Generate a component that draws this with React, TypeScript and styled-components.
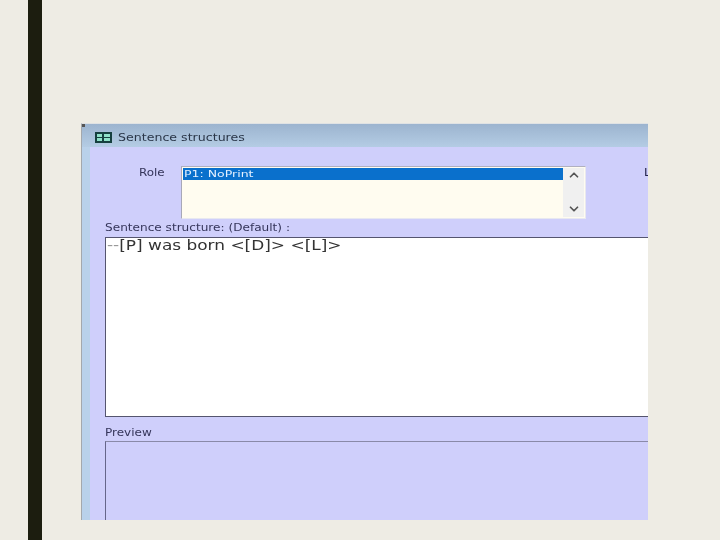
import React from 'react';
import styled, { createGlobalStyle } from 'styled-components';
import { ChevronUp, ChevronDown } from 'lucide-react';

const Global = createGlobalStyle`
  html, body { margin: 0; padding: 0; background: #eeece4; }
  body { font-family: "DejaVu Sans", Verdana, sans-serif; }
`;

const Slide = styled.div`
  width: 720px;
  height: 540px;
  overflow: hidden;
  display: flex;
  background: #eeece4;
`;

const SideBar = styled.div`
  width: 14px;
  margin-left: 28px;
  background: #1c1d0f;
`;

const Shot = styled.div`
  width: 566px;
  height: 396px;
  margin: 123px 0 0 39px;
  position: relative;
  overflow: hidden;
  display: flex;
  flex-direction: column;
  background: #cfcffb;
  border-left: 1px solid #a4a8ac;
  border-top: 1px solid #dfe2e4;
  filter: blur(0.4px);
`;

const CornerTick = styled.div`
  position: absolute;
  left: 0;
  top: 0;
  width: 3px;
  height: 3px;
  background: #555;
`;

const TitleBar = styled.div`
  height: 23px;
  flex: none;
  box-sizing: border-box;
  display: flex;
  align-items: center;
  gap: 6px;
  padding: 3px 0 0 13px;
  background: linear-gradient(#9cb4cf, #b4cce4);
`;

const StretchText = styled.span<{ $size: number; $scale: number; $color?: string }>`
  display: inline-block;
  font-size: ${(p) => p.$size}px;
  line-height: 1;
  white-space: nowrap;
  color: ${(p) => p.$color ?? '#35355a'};
  transform: scaleX(${(p) => p.$scale});
  transform-origin: left center;
`;

const TitleText = styled(StretchText)`
  padding-top: 2px;
`;

const Body = styled.div`
  flex: 1;
  display: flex;
  min-height: 0;
`;

const EdgeStrip = styled.div`
  width: 8px;
  flex: none;
  background: #b9d1ea;
`;

const Content = styled.div`
  flex: 1;
  min-width: 0;
  padding: 19px 0 0 15px;
  display: flex;
  flex-direction: column;
`;

const RoleRow = styled.div`
  height: 53px;
  flex: none;
  display: flex;
  position: relative;
`;

const RoleLabel = styled.div`
  width: 76px;
  padding-left: 34px;
  box-sizing: border-box;
  line-height: 10px;
`;

const ListBox = styled.div`
  width: 405px;
  height: 53px;
  box-sizing: border-box;
  display: flex;
  background: #fffcf0;
  border: 1px solid;
  border-color: #b0b0c0 #e8e8f0 #e8e8f0 #a8a8b8;
  padding: 1px;
`;

const ListItems = styled.div`
  flex: 1;
  min-width: 0;
`;

const SelectedItem = styled.div`
  height: 12px;
  padding-left: 1px;
  display: flex;
  align-items: center;
  background: #0a70cc;
`;

const ScrollTrack = styled.div`
  width: 21px;
  display: flex;
  flex-direction: column;
  justify-content: space-between;
  align-items: center;
  padding-bottom: 1px;
  background: #f0f0f0;
  color: #555;
`;

const ClippedLabel = styled.div`
  position: absolute;
  left: 539px;
  top: 0;
  line-height: 10px;
`;

const FieldLabel = styled.div<{ $top: number }>`
  height: 12px;
  margin-top: ${(p) => p.$top}px;
  flex: none;
  line-height: 12px;
`;

const TextBox = styled.div`
  height: 180px;
  flex: none;
  margin: 5px -10px 0 0;
  box-sizing: border-box;
  background: #fff;
  border: 1px solid #55556f;
  padding-left: 1px;
  line-height: 14px;
`;

const PreviewBox = styled.div`
  flex: 1;
  margin: 4px -10px 0 0;
  border: 1px solid #8a8aa8;
  border-left-color: #66668a;
  border-bottom: none;
`;

const Dash = styled.span`
  color: #9a9a9a;
`;

const GridIcon = () => (
  <svg width="17" height="11" viewBox="0 0 17 11">
    <rect x="0" y="0" width="17" height="11" fill="#16403f" />
    <rect x="2" y="2" width="5" height="3" fill="#8fe0c8" />
    <rect x="9" y="2" width="6" height="3" fill="#8fe0c8" />
    <rect x="2" y="6" width="5" height="3" fill="#8fe0c8" />
    <rect x="9" y="6" width="6" height="3" fill="#8fe0c8" />
  </svg>
);

export default function App() {
  return (
    <Slide>
      <Global />
      <SideBar />
      <Shot>
        <CornerTick />
        <TitleBar>
          <GridIcon />
          <TitleText $size={10} $scale={1.26} $color="#2a3648">Sentence structures</TitleText>
        </TitleBar>
        <Body>
          <EdgeStrip />
          <Content>
            <RoleRow>
              <RoleLabel>
                <StretchText $size={10} $scale={1.19}>Role</StretchText>
              </RoleLabel>
              <ListBox>
                <ListItems>
                  <SelectedItem>
                    <StretchText $size={9} $scale={1.39} $color="#e4f0ff">P1: NoPrint</StretchText>
                  </SelectedItem>
                </ListItems>
                <ScrollTrack>
                  <ChevronUp size={14} strokeWidth={3} />
                  <ChevronDown size={14} strokeWidth={3} />
                </ScrollTrack>
              </ListBox>
              <ClippedLabel>
                <StretchText $size={10} $scale={1.19} $color="#22224a">L</StretchText>
              </ClippedLabel>
            </RoleRow>
            <FieldLabel $top={1}>
              <StretchText $size={10} $scale={1.21}>Sentence structure: (Default) :</StretchText>
            </FieldLabel>
            <TextBox>
              <StretchText $size={14} $scale={1.21} $color="#333">
                <Dash>--</Dash>[P] was born &lt;[D]&gt; &lt;[L]&gt;
              </StretchText>
            </TextBox>
            <FieldLabel $top={8}>
              <StretchText $size={10} $scale={1.2}>Preview</StretchText>
            </FieldLabel>
            <PreviewBox />
          </Content>
        </Body>
      </Shot>
    </Slide>
  );
}
